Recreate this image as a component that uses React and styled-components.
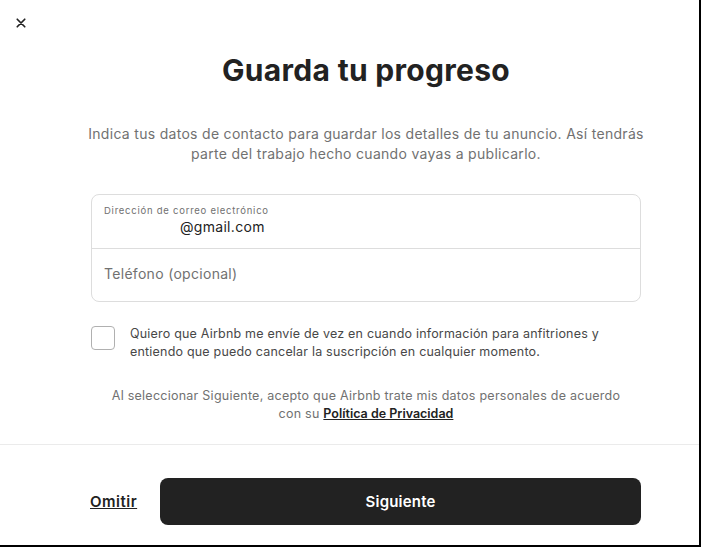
import React, { useState } from 'react';
import styled, { createGlobalStyle } from 'styled-components';

const GlobalStyle = createGlobalStyle`
  html, body {
    margin: 0;
    padding: 0;
    background: #ffffff;
  }
  body {
    font-family: Inter, "Noto Sans", "Liberation Sans", sans-serif;
    color: #222222;
  }
  * { box-sizing: border-box; }
`;

const Modal = styled.div`
  width: 701px;
  height: 547px;
  background: #ffffff;
  border-right: 2px solid #000000;
  border-bottom: 2px solid #000000;
  display: flex;
  flex-direction: column;
`;

const Header = styled.div`
  height: 46px;
  padding: 14px 0 0 14px;
`;

const CloseButton = styled.button`
  width: 14px;
  height: 14px;
  padding: 0;
  border: none;
  background: transparent;
  display: flex;
  align-items: center;
  justify-content: center;
  cursor: pointer;
  margin: 2px 0 0 0;
`;

const Body = styled.div`
  flex: 1;
  display: flex;
  flex-direction: column;
  align-items: center;
  padding: 5px 43px 0 76px;
`;

const Title = styled.h1`
  margin: 0;
  font-size: 30px;
  line-height: 38px;
  font-weight: 700;
  letter-spacing: 0.3px;
  color: #222222;
`;

const Intro = styled.p`
  margin: 35px 0 0;
  font-size: 14px;
  line-height: 20px;
  color: #717171;
  text-align: center;
  letter-spacing: 0.3px;
  white-space: nowrap;
`;

const FieldGroup = styled.div`
  width: 550px;
  margin: 30px 0 0 0;
  border: 1px solid #dddddd;
  border-radius: 8px;
  display: flex;
  flex-direction: column;
`;

const Field = styled.div`
  height: ${p => p.$h}px;
  padding: 0 12px;
  border-top: ${p => (p.$first ? 'none' : '1px solid #dddddd')};
  display: flex;
  flex-direction: column;
  justify-content: ${p => (p.$placeholder ? 'center' : 'flex-start')};
  padding-top: ${p => (p.$placeholder ? '0' : '10px')};
`;

const FieldLabel = styled.span`
  font-size: 9.5px;
  line-height: 12px;
  color: #717171;
  letter-spacing: 0.75px;
`;

const FieldValue = styled.span`
  font-size: 14px;
  line-height: 20px;
  color: #222222;
  padding-left: 76px;
  letter-spacing: 0.3px;
`;

const Placeholder = styled.span`
  font-size: 14px;
  line-height: 18px;
  color: #717171;
  margin-top: -2px;
  letter-spacing: 0.3px;
`;

const ConsentRow = styled.label`
  width: 550px;
  margin-top: 22px;
  display: flex;
  align-items: flex-start;
  gap: 15px;
  cursor: pointer;
`;

const Box = styled.span`
  flex: 0 0 24px;
  width: 24px;
  height: 24px;
  border: 1px solid #b0b0b0;
  border-radius: 4px;
  background: ${p => (p.$checked ? '#222222' : '#ffffff')};
  margin-top: 2px;
`;

const ConsentText = styled.span`
  font-size: 12.5px;
  line-height: 18px;
  color: #484848;
  letter-spacing: 0.2px;
  padding-top: 1px;
  white-space: nowrap;
`;

const Legal = styled.p`
  margin: 26px 0 0;
  font-size: 12.5px;
  line-height: 18px;
  color: #717171;
  text-align: center;
  letter-spacing: 0.25px;
  white-space: nowrap;
`;

const LegalLink = styled.a`
  color: #222222;
  font-weight: 600;
  text-decoration: underline;
  letter-spacing: 0;
`;

const Footer = styled.div`
  height: 101px;
  border-top: 1px solid #ebebeb;
  display: flex;
  align-items: center;
  padding: 12px 58px 0 90px;
  gap: 23px;
`;

const SkipLink = styled.a`
  font-size: 15px;
  font-weight: 600;
  color: #222222;
  text-decoration: underline;
  letter-spacing: 0.5px;
  cursor: pointer;
`;

const NextButton = styled.button`
  flex: 1;
  height: 47px;
  border: none;
  border-radius: 8px;
  background: #222222;
  color: #ffffff;
  font-family: inherit;
  font-size: 15px;
  font-weight: 600;
  letter-spacing: 0.2px;
  cursor: pointer;
`;

function CloseIcon() {
  return (
    <svg width="12" height="12" viewBox="0 0 32 32" fill="none" stroke="#222222" strokeWidth="4.5" strokeLinecap="round">
      <path d="M6 6l20 20M26 6L6 26" />
    </svg>
  );
}

export default function App() {
  const [checked, setChecked] = useState(false);

  return (
    <>
      <GlobalStyle />
      <Modal>
        <Header>
          <CloseButton aria-label="Cerrar">
            <CloseIcon />
          </CloseButton>
        </Header>
        <Body>
          <Title>Guarda tu progreso</Title>
          <Intro>
            Indica tus datos de contacto para guardar los detalles de tu anuncio. Así tendrás
            <br />
            parte del trabajo hecho cuando vayas a publicarlo.
          </Intro>
          <FieldGroup>
            <Field $first $h={53}>
              <FieldLabel>Dirección de correo electrónico</FieldLabel>
              <FieldValue>@gmail.com</FieldValue>
            </Field>
            <Field $placeholder $h={53}>
              <Placeholder>Teléfono (opcional)</Placeholder>
            </Field>
          </FieldGroup>
          <ConsentRow onClick={() => setChecked(!checked)}>
            <Box $checked={checked} />
            <ConsentText>
              Quiero que Airbnb me envíe de vez en cuando información para anfitriones y
              <br />
              entiendo que puedo cancelar la suscripción en cualquier momento.
            </ConsentText>
          </ConsentRow>
          <Legal>
            Al seleccionar Siguiente, acepto que Airbnb trate mis datos personales de acuerdo
            <br />
            con su <LegalLink href="#">Política de Privacidad</LegalLink>
          </Legal>
        </Body>
        <Footer>
          <SkipLink>Omitir</SkipLink>
          <NextButton>Siguiente</NextButton>
        </Footer>
      </Modal>
    </>
  );
}
